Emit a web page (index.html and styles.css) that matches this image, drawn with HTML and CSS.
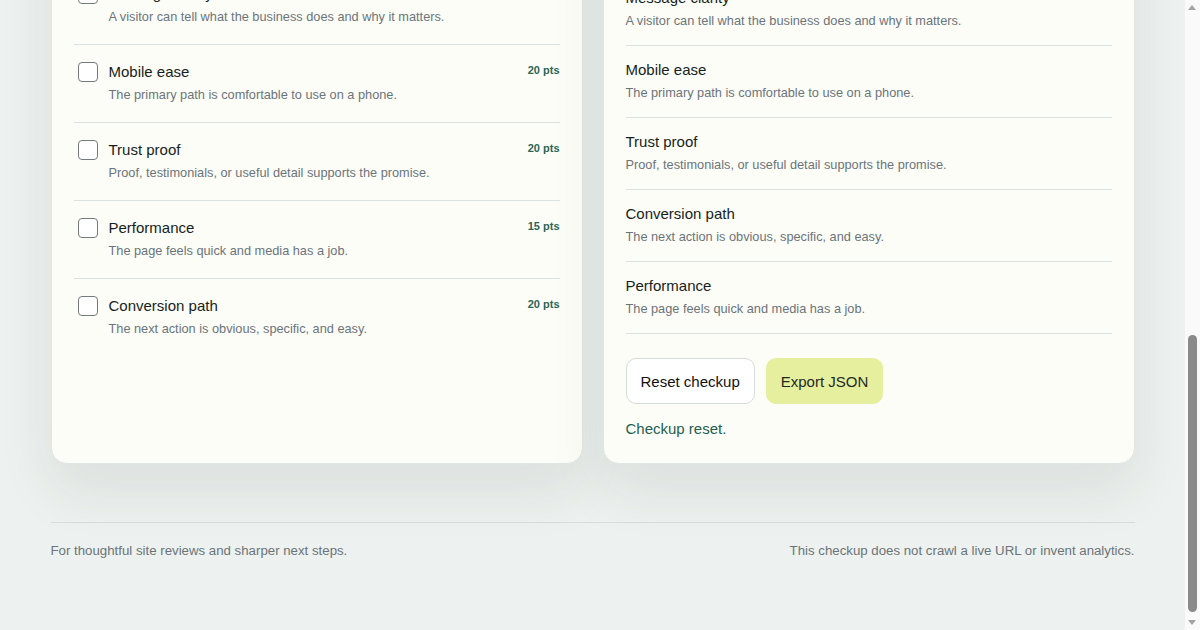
FILE: index.html
```html
<!DOCTYPE html>
<html lang="en">
<head>
<meta charset="utf-8">
<title>Signal Check — Site checkup</title>
<link rel="stylesheet" href="styles.css">
</head>
<body>
<header class="topbar">
  <div class="wrap topbar-inner">
    <div class="brand">
      <svg class="brand-mark" width="28" height="28" viewBox="0 0 28 28" aria-hidden="true">
        <rect x="1" y="1" width="26" height="26" rx="8" fill="#1f5f50"/>
        <path d="M8 14.5l4 4 8-9" fill="none" stroke="#e6ef9e" stroke-width="2.6" stroke-linecap="round" stroke-linejoin="round"/>
      </svg>
      <span>Signal Check</span>
    </div>
    <nav class="nav">
      <a href="#checklist">Checklist</a>
      <a href="#results">Results</a>
      <a href="#about">About</a>
    </nav>
  </div>
</header>

<section class="hero">
  <div class="wrap">
    <p class="hero-eyebrow">Small business site checkup</p>
    <h1 class="hero-title">Find the few fixes that make<br>your site easier to trust.</h1>
    <p class="hero-text">A focused checkup for small business sites. Score five signals,<br>see what to fix first, and export your notes.</p>
    <div class="chips">
      <span class="chip">5 signals</span>
      <span class="chip">100 points</span>
      <span class="chip">No tracking</span>
    </div>
  </div>
</section>

<main class="wrap grid">
  <section class="card" id="checklist">
    <div class="card-head left-head">
      <p class="eyebrow">Checklist</p>
      <h2 class="card-title">Score each signal</h2>
      <p class="card-note">Tick each signal the page already delivers.</p>
      <label class="field-label" for="url">Page you are reviewing</label>
      <input class="field" id="url" type="text" value="https://example.com">
    </div>
    <ul class="checks">
      <li class="check">
        <input class="box" type="checkbox">
        <div class="check-text">
          <p class="item-title">Message clarity</p>
          <p class="item-desc">A visitor can tell what the business does and why it matters.</p>
        </div>
        <span class="pts">25 pts</span>
      </li>
      <li class="check">
        <input class="box" type="checkbox">
        <div class="check-text">
          <p class="item-title">Mobile ease</p>
          <p class="item-desc">The primary path is comfortable to use on a phone.</p>
        </div>
        <span class="pts">20 pts</span>
      </li>
      <li class="check">
        <input class="box" type="checkbox">
        <div class="check-text">
          <p class="item-title">Trust proof</p>
          <p class="item-desc">Proof, testimonials, or useful detail supports the promise.</p>
        </div>
        <span class="pts">20 pts</span>
      </li>
      <li class="check">
        <input class="box" type="checkbox">
        <div class="check-text">
          <p class="item-title">Performance</p>
          <p class="item-desc">The page feels quick and media has a job.</p>
        </div>
        <span class="pts">15 pts</span>
      </li>
      <li class="check">
        <input class="box" type="checkbox">
        <div class="check-text">
          <p class="item-title">Conversion path</p>
          <p class="item-desc">The next action is obvious, specific, and easy.</p>
        </div>
        <span class="pts">20 pts</span>
      </li>
    </ul>
  </section>

  <section class="card" id="results">
    <div class="card-head right-head">
      <p class="eyebrow">Results</p>
      <p class="score">0 / 100</p>
      <p class="summary">Nothing checked yet. Start with the signals below.</p>
      <div class="meter"><span class="meter-fill" style="width: 0%"></span></div>
      <h3 class="fix-title">Fix these first</h3>
    </div>
    <ul class="fixes">
      <li class="fix">
        <p class="item-title">Message clarity</p>
        <p class="item-desc">A visitor can tell what the business does and why it matters.</p>
      </li>
      <li class="fix">
        <p class="item-title">Mobile ease</p>
        <p class="item-desc">The primary path is comfortable to use on a phone.</p>
      </li>
      <li class="fix">
        <p class="item-title">Trust proof</p>
        <p class="item-desc">Proof, testimonials, or useful detail supports the promise.</p>
      </li>
      <li class="fix">
        <p class="item-title">Conversion path</p>
        <p class="item-desc">The next action is obvious, specific, and easy.</p>
      </li>
      <li class="fix">
        <p class="item-title">Performance</p>
        <p class="item-desc">The page feels quick and media has a job.</p>
      </li>
    </ul>
    <div class="actions">
      <button class="btn btn-ghost" type="button">Reset checkup</button>
      <button class="btn btn-accent" type="button">Export JSON</button>
    </div>
    <p class="status">Checkup reset.</p>
  </section>
</main>

<footer class="wrap footer" id="about">
  <div class="footer-inner">
    <p>For thoughtful site reviews and sharper next steps.</p>
    <p>This checkup does not crawl a live URL or invent analytics.</p>
  </div>
</footer>

<div class="scrollbar" aria-hidden="true">
  <span class="sb-arrow sb-up"></span>
  <span class="sb-thumb"></span>
  <span class="sb-arrow sb-down"></span>
</div>
<script src="script.js"></script>
</body>
</html>
```

FILE: styles.css
```css
* { box-sizing: border-box; }

html { scroll-behavior: auto; }

body {
  margin: 0 15px 0 0;
  background: #edf1ef;
  color: #1b2327;
  font-family: "Liberation Sans", Arial, sans-serif;
  padding-bottom: 70px;
}

p, h1, h2, h3, ul { margin: 0; padding: 0; }
ul { list-style: none; }

.wrap {
  max-width: 1180px;
  margin: 0 auto;
  padding: 0 48px;
}

/* top bar */
.topbar { padding: 22px 0; }
.topbar-inner {
  display: flex;
  align-items: center;
  justify-content: space-between;
  height: 28px;
}
.brand {
  display: flex;
  align-items: center;
  gap: 10px;
  font-size: 17px;
  font-weight: 700;
  color: #1b2327;
}
.brand-mark { display: block; }
.nav { display: flex; gap: 24px; }
.nav a {
  color: #4d5a60;
  text-decoration: none;
  font-size: 14px;
}

/* hero */
.hero { padding: 88px 0 79px; }
.hero-eyebrow {
  font-size: 13px;
  line-height: 18px;
  margin-bottom: 14px;
  color: #1f5f50;
  font-weight: 700;
  text-transform: uppercase;
  letter-spacing: 0.08em;
}
.hero-title {
  font-size: 46px;
  line-height: 52px;
  font-weight: 700;
  white-space: nowrap;
  color: #152024;
}
.hero-text {
  margin-top: 18px;
  font-size: 17px;
  line-height: 28px;
  color: #5b676d;
  white-space: nowrap;
}
.chips {
  display: flex;
  gap: 10px;
  margin-top: 28px;
  height: 36px;
}
.chip {
  display: flex;
  align-items: center;
  padding: 0 14px;
  border-radius: 999px;
  background: #fdfdf8;
  border: 1px solid #dce2df;
  font-size: 13px;
  color: #3f4b50;
}

/* grid */
.grid {
  display: grid;
  grid-template-columns: 1fr 1fr;
  gap: 20px;
}

.card {
  display: flex;
  flex-direction: column;
  background: #fdfdf8;
  border: 1px solid #e1e6e2;
  border-radius: 16px;
  padding: 22px 22px 24px;
  box-shadow: 0 26px 56px rgba(34, 56, 48, 0.09);
}

.card-head { display: flex; flex-direction: column; }

.eyebrow {
  font-size: 12px;
  line-height: 16px;
  margin-bottom: 8px;
  color: #1f5f50;
  font-weight: 700;
  text-transform: uppercase;
  letter-spacing: 0.08em;
}

.left-head { padding-bottom: 6px; }
.card-title {
  font-size: 24px;
  line-height: 30px;
  font-weight: 700;
}
.card-note {
  margin-top: 8px;
  font-size: 14px;
  line-height: 20px;
  color: #66717a;
}
.field-label {
  margin-top: 15px;
  font-size: 12px;
  line-height: 16px;
  color: #4d5a60;
}
.field {
  margin-top: 6px;
  height: 40px;
  border: 1px solid #d6ddd8;
  border-radius: 10px;
  background: #ffffff;
  padding: 0 12px;
  font: 14px "Liberation Sans", Arial, sans-serif;
  color: #1b2327;
}

.score {
  font-size: 44px;
  line-height: 48px;
  font-weight: 700;
  color: #152024;
}
.summary {
  margin-top: 8px;
  font-size: 14px;
  line-height: 20px;
  color: #66717a;
}
.meter {
  margin: 18px 0;
  height: 10px;
  border-radius: 999px;
  background: #e3e8e5;
  overflow: hidden;
}
.meter-fill {
  display: block;
  height: 100%;
  background: #1f5f50;
}
.fix-title {
  font-size: 16px;
  line-height: 22px;
  font-weight: 700;
  margin-bottom: 4px;
}

/* shared item text */
.item-title {
  font-size: 15px;
  line-height: 22px;
  font-weight: 500;
  color: #161e22;
}
.item-desc {
  margin-top: 2px;
  font-size: 12.75px;
  line-height: 20px;
  color: #6a747b;
}

/* checklist */
.check {
  display: grid;
  grid-template-columns: auto 1fr auto;
  column-gap: 11px;
  align-items: start;
  padding: 16px 0 17px;
}
.check + .check { border-top: 1px solid #dce2df; }

.box {
  appearance: none;
  -webkit-appearance: none;
  width: 20px;
  height: 20px;
  margin: 1px 0 0 4px;
  border: 1.5px solid #74797d;
  border-radius: 4px;
  background: #ffffff;
}

.pts {
  font-size: 11px;
  line-height: 18px;
  font-weight: 700;
  color: #2a6656;
  white-space: nowrap;
}

/* fixes */
.fix {
  padding: 13px 0 14px;
  border-bottom: 1px solid #dce2df;
}

.actions {
  display: flex;
  gap: 11px;
  margin-top: 24px;
}
.btn {
  height: 46px;
  padding: 0 14px;
  border-radius: 10px;
  font: 500 15px "Liberation Sans", Arial, sans-serif;
  cursor: pointer;
}
.btn-ghost {
  background: #ffffff;
  border: 1px solid #d6ddd8;
  color: #111111;
}
.btn-accent {
  background: #e6ef9e;
  border: 1px solid #e6ef9e;
  color: #1d2a24;
}

.status {
  margin-top: 15px;
  font-size: 15px;
  line-height: 20px;
  font-weight: 500;
  color: #1f5f50;
}

/* footer */
.footer { margin-top: 58px; }
.footer-inner {
  display: flex;
  justify-content: space-between;
  border-top: 1px solid #d8dedb;
  padding-top: 19px;
}
.footer p {
  font-size: 13.25px;
  line-height: 18px;
  color: #6b7479;
}

/* window scrollbar (drawn, since the capture hides native ones) */
.scrollbar {
  position: fixed;
  top: 0;
  right: 0;
  bottom: 0;
  width: 15px;
  background: #fafafa;
}
.sb-thumb {
  position: absolute;
  left: 3px;
  top: 335px;
  width: 9px;
  height: 277px;
  border-radius: 5px;
  background: #8a8a8a;
}
.sb-arrow {
  position: absolute;
  left: 3px;
  width: 0;
  height: 0;
  border-left: 4.5px solid transparent;
  border-right: 4.5px solid transparent;
}
.sb-up {
  top: 5px;
  border-bottom: 5px solid #a3a3a3;
}
.sb-down {
  bottom: 5px;
  border-top: 5px solid #a3a3a3;
}
```

FILE: script.js
```js
function toBottom() {
  window.scrollTo(0, document.documentElement.scrollHeight);
}
toBottom();
document.addEventListener('DOMContentLoaded', toBottom);
window.addEventListener('load', toBottom);
```
